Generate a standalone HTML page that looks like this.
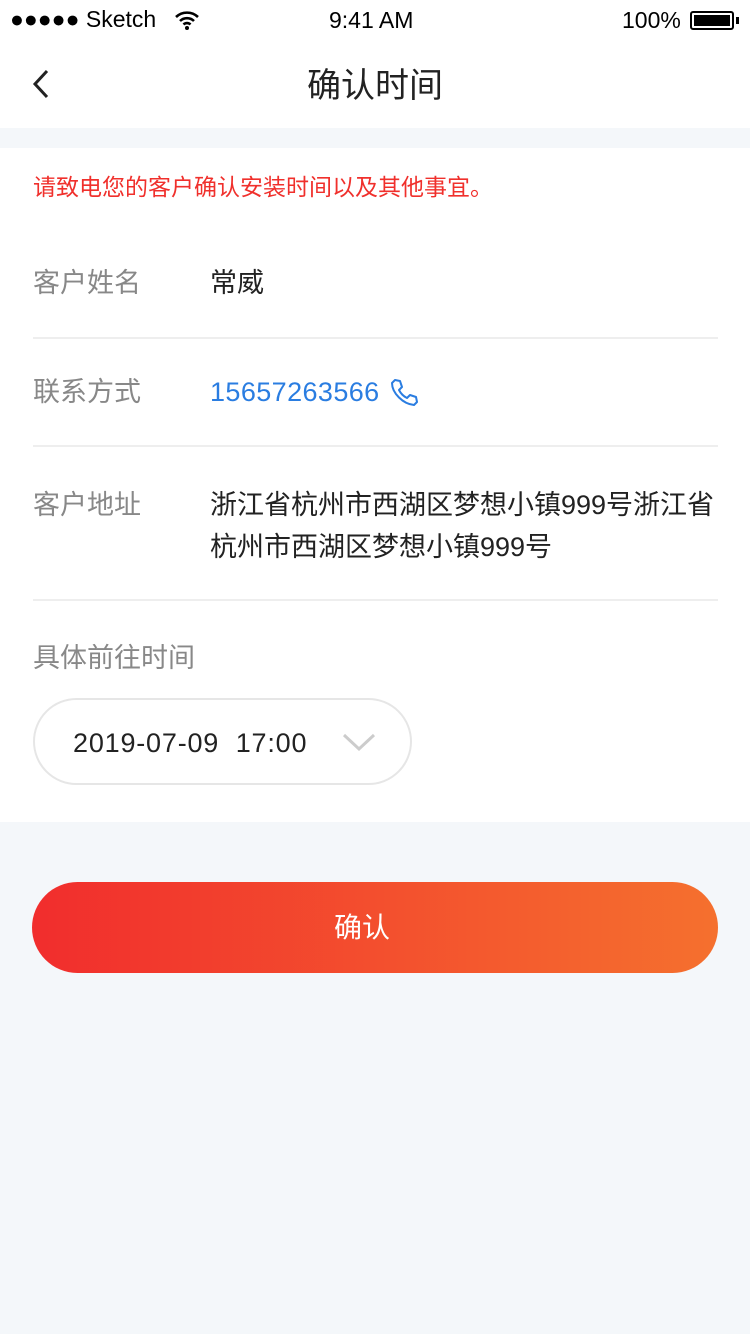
<!DOCTYPE html>
<html><head><meta charset="utf-8"><style>
*{margin:0;padding:0;box-sizing:border-box}
body{width:750px;height:1334px;background:#f4f7fa;font-family:"Liberation Sans","Noto Sans CJK SC",sans-serif;position:relative;overflow:hidden}
.abs{position:absolute}
.top{position:absolute;left:0;top:0;width:750px;height:128px;background:#fff}
.card{position:absolute;left:0;top:148px;width:750px;height:674px;background:#fff}
.lbl{position:absolute;left:33px;font-size:27px;color:#888;line-height:36px}
.val{position:absolute;left:210px;font-size:27px;color:#222;line-height:36px}
.line{position:absolute;left:33px;width:685px;height:2px;background:#eee}
</style></head><body>
<div class="top">
<div class="abs" style="left:10px;top:6px;font-size:23px;color:#000">●●●●● Sketch</div>
<svg class="abs" style="left:174px;top:10px" width="26" height="20" viewBox="0 0 26 20"><path d="M2 7a16 16 0 0 1 22 0M6 11a10 10 0 0 1 14 0M9.5 14.5a5 5 0 0 1 7 0" stroke="#000" stroke-width="2.6" fill="none"/><circle cx="13" cy="18" r="2" fill="#000"/></svg>
<div class="abs" style="left:329px;top:7px;font-size:23px;color:#000">9:41 AM</div>
<div class="abs" style="left:622px;top:7px;font-size:23px;color:#000">100%</div>
<div class="abs" style="left:690px;top:11px;width:44px;height:19px;border:2px solid #000;border-radius:3px;padding:2px"><div style="width:100%;height:100%;background:#000"></div></div>
<div class="abs" style="left:736px;top:17px;width:3px;height:7px;background:#000"></div>
<svg class="abs" style="left:30px;top:69px" width="20" height="30"><path d="M17 2L5 15l12 13" stroke="#222" stroke-width="3" fill="none"/></svg>
<div class="abs" style="left:0;width:750px;top:64px;line-height:44px;text-align:center;font-size:34px;color:#222">确认时间</div>
</div>
<div class="card">
<div class="abs" style="left:33px;top:23px;line-height:32px;font-size:23px;color:#f0302c">请致电您的客户确认安装时间以及其他事宜。</div>
<div class="lbl" style="top:117px">客户姓名</div><div class="val" style="top:117px">常威</div>
<div class="line" style="top:189px"></div>
<div class="lbl" style="top:226px">联系方式</div><div class="val" style="top:226px;color:#2a7de1;letter-spacing:0.4px">15657263566</div>
<svg class="abs" style="left:389px;top:229px" width="30" height="30" viewBox="0 0 30 30"><path d="M6 3l5 1 2 6-3 3c2 4 4 6 8 8l3-3 6 2 1 5-3 3C14 27 3 16 3 6z" stroke="#2a7de1" stroke-width="2" fill="none" stroke-linejoin="round"/></svg>
<div class="line" style="top:297px"></div>
<div class="lbl" style="top:339px">客户地址</div><div class="val" style="top:336px;width:520px;line-height:42px">浙江省杭州市西湖区梦想小镇999号浙江省杭州市西湖区梦想小镇999号</div>
<div class="line" style="top:451px"></div>
<div class="lbl" style="top:492px">具体前往时间</div>
<div class="abs" style="left:33px;top:550px;width:379px;height:87px;border:2px solid #e6e6e6;border-radius:44px"></div>
<div class="abs" style="left:73px;top:577px;line-height:36px;font-size:27px;color:#222;white-space:pre;letter-spacing:0.8px">2019-07-09  17:00</div>
<svg class="abs" style="left:342px;top:584px" width="34" height="20"><path d="M2 3l15 14L32 3" stroke="#ccc" stroke-width="3" fill="none"/></svg>
</div>
<div class="abs" style="left:32px;top:882px;width:686px;height:91px;border-radius:46px;background:linear-gradient(90deg,#f12d2d,#f5702e)"></div>
<div class="abs" style="left:334px;top:908px;line-height:40px;color:#fff;font-size:28px">确认</div>
</body></html>
